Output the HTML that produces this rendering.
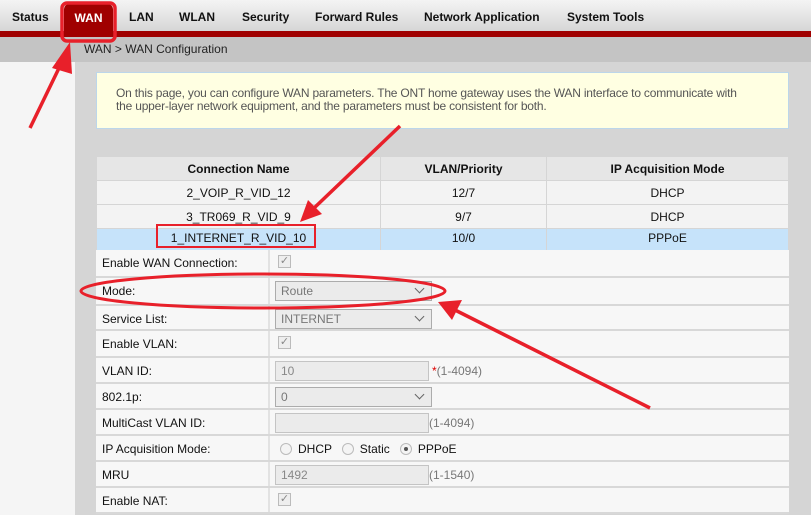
<!DOCTYPE html>
<html><head><style>
*{margin:0;padding:0;box-sizing:border-box}
body{width:811px;height:515px;overflow:hidden;position:relative;font-family:"Liberation Sans",Arial,sans-serif;font-size:12px;background:#d5d5d5;color:#111}
.nav{position:absolute;left:0;top:0;width:811px;height:31px;background:linear-gradient(#f4f4f4,#d6d6d6)}
.nav span{position:absolute;top:10px;font-weight:bold;font-size:12px;color:#111}
.redline{position:absolute;left:0;top:31px;width:811px;height:6px;background:#a00000}
.wan{position:absolute;left:64px;top:4px;width:49px;height:30px;background:#a00000;border-radius:5px 5px 0 0;color:#fff;font-weight:bold;font-size:12px;text-align:center;padding-top:7px}
.bc{position:absolute;left:0;top:37px;width:811px;height:25px;background:#c4c4c4}
.bc span{position:absolute;left:84px;top:5px;color:#222}
.left{position:absolute;left:0;top:62px;width:75px;height:453px;background:#f5f5f5}
.note{position:absolute;left:96px;top:72px;width:693px;height:57px;background:#ffffe2;border:1px solid #bcd6ea;color:#555;padding:14px 0 0 19px;line-height:13px;font-size:12px;letter-spacing:-0.2px}
table{position:absolute;left:96px;top:156px;width:693px;border-collapse:collapse}
td{height:24px;text-align:center;border:1px solid #d5d5d5;background:#f3f3f3;padding:0}
tr.h td{background:#e6e6e6;font-weight:bold}
tr.s td{background:#c6e3fa;height:22px;padding-bottom:3px}
.row{position:absolute;left:96px;width:693px;background:#f7f7f7;border-bottom:2px solid #d8d8d8}
.row .l{position:absolute;left:6px;top:6px}
.row .v{position:absolute;left:172px;top:0;width:2px;height:100%;background:#e2e2e2}
.sel{position:absolute;left:179px;top:3px;width:157px;height:20px;background:#ebebeb;border:1px solid #acacac;color:#777;padding:2px 5px}
.sel:after{content:"";position:absolute;right:8px;top:3px;width:6px;height:6px;border-right:1.5px solid #666;border-bottom:1.5px solid #666;transform:rotate(45deg)}
.inp{position:absolute;left:179px;top:3px;width:154px;height:20px;background:#ebebeb;border:1px solid #c4c4c4;color:#888;padding:2px 5px}
.hint{position:absolute;left:333px;top:6px;color:#777}
.cb{position:absolute;left:182px;top:5px;width:13px;height:13px;border:1px solid #bbb;background:#eee;color:#888;font-size:11px;line-height:11px;text-align:center}
.rad{display:inline-block;width:12px;height:12px;border:1px solid #bbb;border-radius:50%;background:#f4f4f4;vertical-align:-2px;margin-right:6px;position:relative}
</style></head><body>
<div class="nav">
<span style="left:12px">Status</span>
<span style="left:129px">LAN</span>
<span style="left:179px">WLAN</span>
<span style="left:242px">Security</span>
<span style="left:315px">Forward Rules</span>
<span style="left:424px">Network Application</span>
<span style="left:567px">System Tools</span>
</div>
<div class="redline"></div>
<div class="wan">WAN</div>
<div class="bc"><span>WAN &gt; WAN Configuration</span></div>
<div class="left"></div>
<div class="note">On this page, you can configure WAN parameters. The ONT home gateway uses the WAN interface to communicate with<br>the upper-layer network equipment, and the parameters must be consistent for both.</div>
<table>
<tr class="h"><td style="width:284px">Connection Name</td><td style="width:166px">VLAN/Priority</td><td>IP Acquisition Mode</td></tr>
<tr><td>2_VOIP_R_VID_12</td><td>12/7</td><td>DHCP</td></tr>
<tr><td>3_TR069_R_VID_9</td><td>9/7</td><td>DHCP</td></tr>
<tr class="s"><td>1_INTERNET_R_VID_10</td><td>10/0</td><td>PPPoE</td></tr>
</table>
<div class="row" style="top:250px;height:28px"><span class="l">Enable WAN Connection:</span><i class="v"></i><div class="cb">✓</div></div>
<div class="row" style="top:278px;height:28px"><span class="l">Mode:</span><i class="v"></i><div class="sel">Route</div></div>
<div class="row" style="top:306px;height:25px"><span class="l">Service List:</span><i class="v"></i><div class="sel">INTERNET</div></div>
<div class="row" style="top:331px;height:27px"><span class="l">Enable VLAN:</span><i class="v"></i><div class="cb">✓</div></div>
<div class="row" style="top:358px;height:26px"><span class="l">VLAN ID:</span><i class="v"></i><div class="inp">10</div><span class="hint" style="left:336px"><b style="color:#d00;font-weight:normal">*</b>(1-4094)</span></div>
<div class="row" style="top:384px;height:26px"><span class="l">802.1p:</span><i class="v"></i><div class="sel">0</div></div>
<div class="row" style="top:410px;height:26px"><span class="l">MultiCast VLAN ID:</span><i class="v"></i><div class="inp"></div><span class="hint">(1-4094)</span></div>
<div class="row" style="top:436px;height:26px"><span class="l">IP Acquisition Mode:</span><i class="v"></i><span style="position:absolute;left:184px;top:6px"><span class="rad"></span>DHCP &nbsp;&nbsp;<span class="rad"></span>Static &nbsp;&nbsp;<span class="rad"><i style="position:absolute;left:3px;top:3px;width:4px;height:4px;border-radius:50%;background:#555"></i></span>PPPoE</span></div>
<div class="row" style="top:462px;height:26px"><span class="l">MRU</span><i class="v"></i><div class="inp">1492</div><span class="hint">(1-1540)</span></div>
<div class="row" style="top:488px;height:26px"><span class="l">Enable NAT:</span><i class="v"></i><div class="cb">✓</div></div>
<svg width="811" height="515" style="position:absolute;left:0;top:0" fill="none">
<rect x="62" y="3" width="53" height="38" rx="5" stroke="#e8202a" stroke-width="3.5"/>
<rect x="157" y="225" width="158" height="22" stroke="#e8202a" stroke-width="2"/>
<ellipse cx="263" cy="291" rx="182" ry="17" stroke="#e8202a" stroke-width="3"/>
<g stroke="#e8202a" stroke-width="3.5"><line x1="30" y1="128" x2="60" y2="66"/><line x1="400" y1="126" x2="312" y2="210"/><line x1="650" y1="408" x2="455" y2="310"/></g>
<g fill="#e8202a"><polygon points="70,42 52,68 72,74"/><polygon points="300,222 308,200 322,214"/><polygon points="438,302 462,300 452,320"/></g>
</svg>
</body></html>
